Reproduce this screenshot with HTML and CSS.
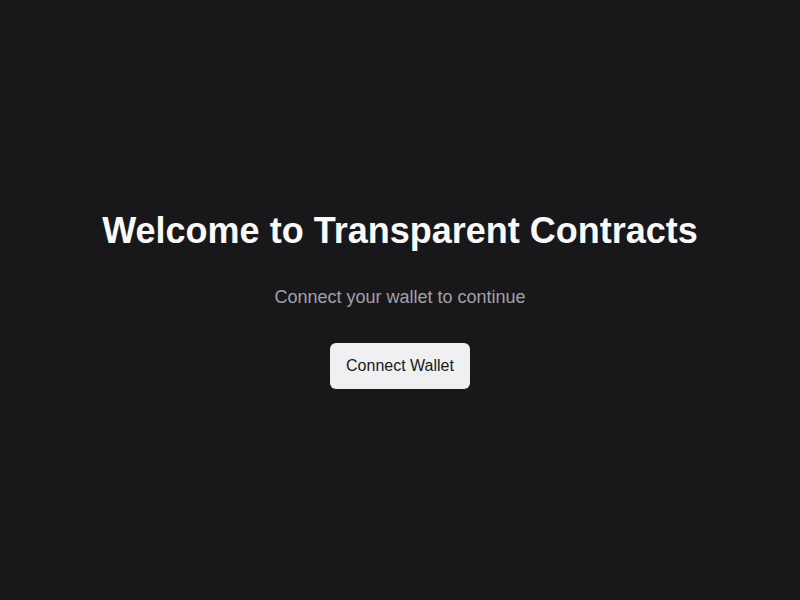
FILE: index.html
```html
<!DOCTYPE html>
<html lang="en">
<head>
<meta charset="utf-8">
<title>Transparent Contracts</title>
<link rel="stylesheet" href="styles.css">
</head>
<body>
<main class="screen">
  <h1 class="title">Welcome to Transparent Contracts</h1>
  <p class="subtitle">Connect your wallet to continue</p>
  <button class="connect-btn" type="button">Connect Wallet</button>
</main>
</body>
</html>
```
FILE: styles.css
```css
html, body {
  margin: 0;
  padding: 0;
  height: 100%;
}
body {
  background: #18181b;
  font-family: "Liberation Sans", Arial, sans-serif;
}
.screen {
  height: 100vh;
  display: flex;
  flex-direction: column;
  align-items: center;
  justify-content: center;
}
.title {
  margin: 0 0 32px;
  font-size: 36px;
  line-height: 40px;
  font-weight: 700;
  color: #fafafa;
}
.subtitle {
  margin: 0 0 32px;
  font-size: 18px;
  line-height: 28px;
  color: #a1a1aa;
}
.connect-btn {
  font-family: inherit;
  font-size: 16px;
  line-height: 24px;
  padding: 11px 16px;
  border: none;
  border-radius: 6px;
  background: #f0f0f2;
  color: #18181b;
  cursor: pointer;
}
```
